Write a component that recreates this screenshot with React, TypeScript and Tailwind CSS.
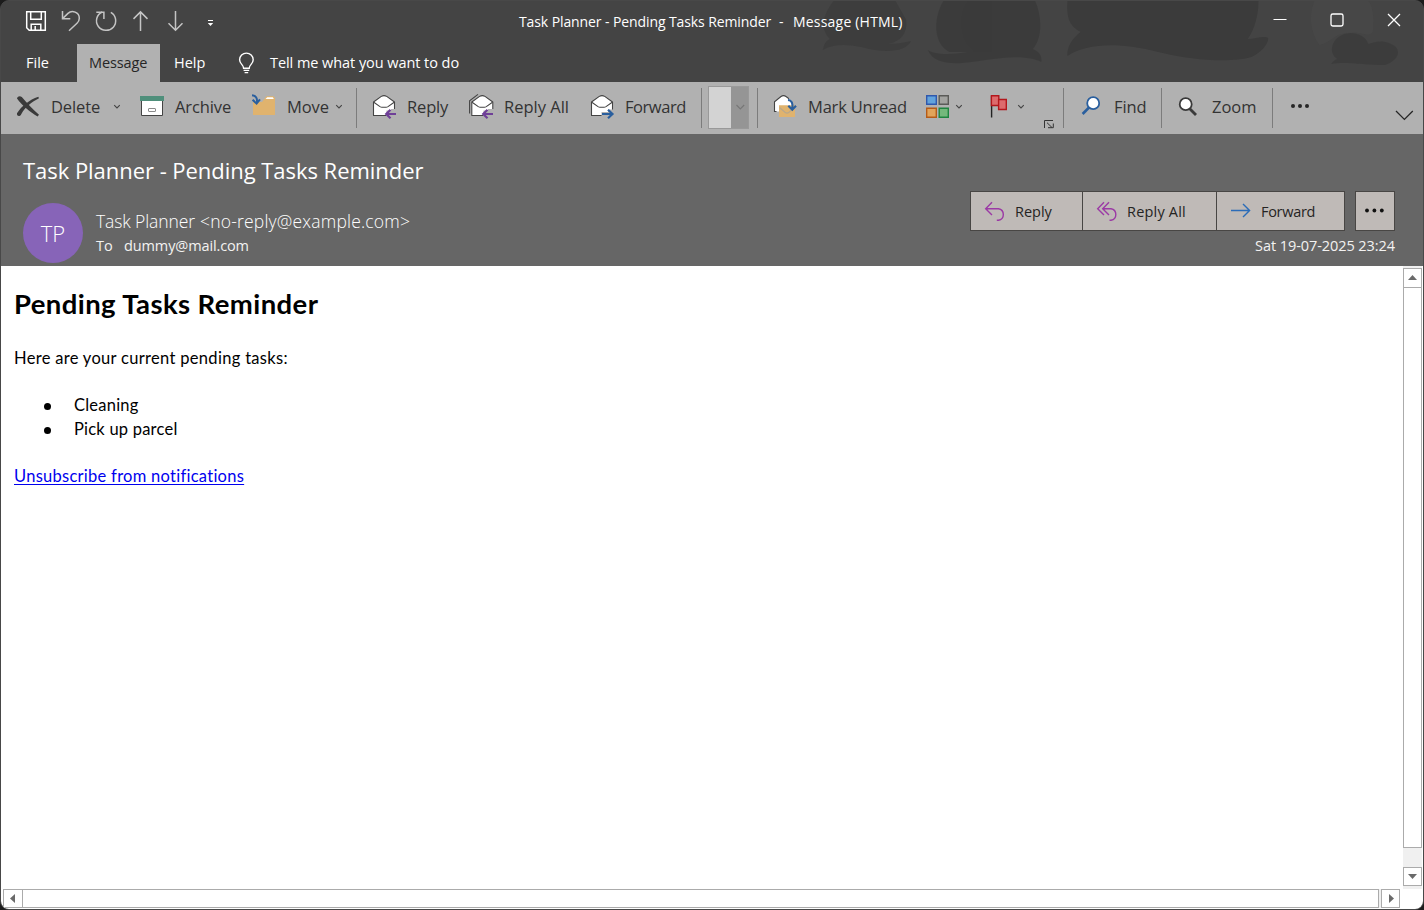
import React from "react";

/* A single line of text that keeps its own width inside a flex row. */
function T({ c = "", children }: { c?: string; children: React.ReactNode }) {
  return <span className={`shrink-0 whitespace-nowrap ${c}`}>{children}</span>;
}

/* Icons share the window's coordinate system: x/y is the window position of the box. */
function Ico({ x, y, w, h, children }: { x: number; y: number; w: number; h: number; children?: React.ReactNode }) {
  return (
    <svg className="shrink-0" width={w} height={h} viewBox={`${x} ${y} ${w} ${h}`} fill="none">
      {children}
    </svg>
  );
}

const Chevron = ({ x, y = 106.5 }: { x: number; y?: number }) => (
  <path d={`M${x - 2.8} ${y - 1.4} l2.8 2.8 l2.8 -2.8`} stroke="#444" strokeWidth="1.1" />
);

const Sep = () => <div className="h-10 w-px shrink-0 bg-[#7c7c7c]" />;

const Envelope = ({ x }: { x: number }) => (
  <g transform={`translate(${x} 0)`} stroke="#444" strokeWidth="1.1" strokeLinejoin="round">
    <path d="M.5 115.5V102L8.3 96.4Q11 94.8 13.7 96.4L21.5 102V115.5Z" fill="#fff" />
    <path d="M.8 102.3L7 106.6Q8 107.2 9 107.2H13Q14 107.2 15 106.6L21.2 102.3" />
  </g>
);

const t = "text-[16.5px] text-[#333] pb-0.5";

export default function App() {
  return (
    <div className="h-[910px] w-[1424px] overflow-hidden bg-[#1c1c1c] font-['Open_Sans',sans-serif]">
      <div className="flex h-[910px] w-[1424px] flex-col overflow-hidden rounded-[9px] border border-[#484848] bg-[#444]">
        <div className="relative h-[81px] shrink-0">
          <svg className="absolute inset-0" width="1422" height="81" viewBox="1 1 1422 81" fill="#3b3b3b">
            <g transform="translate(-155.2 0) scale(1.194 1)">
              <path d="M828 1C817 19 818 30 825 39C820 42 820 47 819 50C827 44 839 44 851 47C870 53 888 53 893 41C886 43 880 44 874 44C885 41 890 33 889 20L880 1Z" opacity=".75" />
              <path d="M940 1C932 12 932 42 945 51C925 56 911 54 907 50C911 61 921 64 936 63C956 61 977 54 995 59C998 60 1001 61 1002 62C1003 57 1001 52 995 49C1003 39 1003 17 997 1Z" opacity=".9" />
              <path d="M920 1C911 20 912 44 925 52L960 52V1Z" opacity=".9" />
              <path d="M1024 1C1023 16 1025 26 1035 32C1028 38 1023 48 1024 56C1040 43 1068 42 1100 52C1134 62 1163 62 1178 57C1186 53 1193 43 1192 38C1189 35 1181 39 1175 39C1181 29 1184 14 1184 1Z" />
              <path d="M1231 1C1226 15 1227 31 1235 45C1245 42 1246 35 1257 33C1272 30 1278 40 1280 30C1281 15 1279 5 1276 1Z" fill="#4a4a4a" opacity=".55" />
              <path d="M1261 33C1246 34 1241 52 1250 59C1247 60 1246 62 1245 64C1256 61 1272 65 1290 65C1303 60 1306 46 1290 42C1285 41 1281 42 1276 44C1274 37 1268 33 1261 33Z" opacity=".8" />
            </g>
          </svg>
          <div className="relative flex h-[43px] items-center text-[14px] text-white">
            <Ico x={1} y={1} w={518} h={43}>
              <g stroke="#fff" strokeWidth="1.5">
                <path d="M26.7 11.7H45.3V30.3H29.2L26.7 27.8Z" />
                <path d="M30.7 12V19.2H41.3V12" />
                <path d="M31.2 30V24.2H40.8V30M35.2 26V30" />
              </g>
              <g stroke="#c4c4c4" strokeWidth="1.5">
                <path d="M62.5 11V18.7H70.3" />
                <path d="M62.8 18.4L68 13.4C72 9.6 79.3 12.3 79.3 18.2C79.3 20.3 78.5 21.8 77 23.2L69 30.7" />
                <path d="M96.3 12.2H103.9V19" />
                <path d="M110.8 12.4A9.6 9.6 0 1 1 102.2 12" />
                <path d="M140.5 31V12M133.5 18.9L140.5 11.9L147.5 18.9" />
                <path d="M175.5 11V30M168.5 23.2L175.5 30.2L182.5 23.2" />
              </g>
              <path d="M208 20.5H213" stroke="#fff" />
              <path d="M207.8 23H213.2L210.5 26Z" fill="#fff" />
            </Ico>
            <div className="flex w-[741px] shrink-0 pb-0.5">
              <T c="w-[260px] tracking-[-0.1px]">Task Planner - Pending Tasks Reminder</T>
              <T c="w-[14px]">-</T>
              <T c="tracking-[0.2px]">Message (HTML)</T>
            </div>
            <Ico x={1260} y={1} w={163} h={43}>
              <path d="M1273.5 19.5H1286.5" stroke="#fff" strokeWidth="1.2" />
              <rect x="1331" y="14" width="12" height="12" rx="1.8" stroke="#fff" strokeWidth="1.3" />
              <path d="M1388 14L1400 26M1400 14L1388 26" stroke="#fff" strokeWidth="1.3" />
            </Ico>
          </div>
          <div className="relative flex h-[38px] items-center pl-[25px] text-[14.5px] text-white">
            <T c="w-[51px]">File</T>
            <div className="flex h-[38px] w-[83px] items-center bg-[#b1b1b1] pl-3 tracking-[-0.1px] text-[#262626]">
              <T>Message</T>
            </div>
            <T c="ml-3.5 w-[56px]">Help</T>
            <Ico x={230} y={44} w={40} h={38}>
              <path d="M243.6 68.3C243.6 64.6 239.6 64 239.6 59.7A6.8 6.6 0 0 1 253.2 59.7C253.2 64 249.2 64.6 249.2 68.3ZM243.6 70.4H249.2M244.6 72.6H248.2" stroke="#fff" strokeWidth="1.4" />
            </Ico>
            <T c="tracking-[-0.06px]">Tell me what you want to do</T>
          </div>
        </div>

        <div className="flex h-[52px] shrink-0 items-center bg-[#b1b1b1]">
          <Ico x={1} y={82} w={50} h={52}>
            <path d="M17 98.4C17.6 96.2 20 95.5 21.8 97.1C27.5 103.5 32.5 109.3 39 114.8L37.6 116.5C30 111.8 22.3 105.8 17 98.4Z" fill="#3a3a3a" />
            <path d="M39 98.3C31.8 101.9 25 107.3 21.1 114.4C19.6 117 16.4 115.9 17 113.3C21.5 106.2 29.3 99.8 38.3 96.8Z" fill="#3a3a3a" />
          </Ico>
          <T c={`w-[56px] tracking-[-0.1px] ${t}`}>Delete</T>
          <Ico x={107} y={82} w={68} h={52}>
            <Chevron x={117} />
            <path d="M141.5 100V115.5H162.5V100Z" fill="#fff" stroke="#444" />
            <path d="M140 96H164V101H140Z" fill="#4f8f7b" />
            <rect x="148.5" y="108.5" width="7" height="3" rx=".5" stroke="#8a8a8a" />
          </Ico>
          <T c={`w-[69px] tracking-[-0.1px] ${t}`}>Archive</T>
          <Ico x={244} y={82} w={43} h={52}>
            <path d="M253 102H262L266.5 96.3H273.5L275 98V115H253Z" fill="#e0b36e" />
            <path d="M265.5 99L267.2 97.2H272.8L273.8 99Z" fill="#fff" />
            <path d="M252 95.2C256 95.5 257.6 98.5 256.9 103M252.6 99.7L256.6 103.6L260 99.3" stroke="#2a5f9e" strokeWidth="2" />
          </Ico>
          <T c={`w-[46px] tracking-[-0.1px] ${t}`}>Move</T>
          <Ico x={333} y={82} w={23} h={52}>
            <Chevron x={339} />
          </Ico>
          <Sep />
          <Ico x={357} y={82} w={50} h={52}>
            <Envelope x={373} />
            <path d="M386.5 110.5H391V109H397V119H386Z" fill="#b1b1b1" />
            <path d="M396 114H386.3M390.5 109.7L386.2 114L390.5 118.3" stroke="#6f3f98" strokeWidth="2.2" />
          </Ico>
          <T c={`w-[53px] tracking-[-0.15px] ${t}`}>Reply</T>
          <Ico x={460} y={82} w={44} h={52}>
            <path d="M469.6 113.5V100.7L478 94.4" stroke="#444" strokeWidth="1.1" />
            <Envelope x={471.3} />
            <path d="M483.5 110.5H488V109H494V119H483Z" fill="#b1b1b1" />
            <path d="M493 114H483.3M487.5 109.7L483.2 114L487.5 118.3" stroke="#6f3f98" strokeWidth="2.2" />
          </Ico>
          <T c={`w-[76px] ${t}`}>Reply All</T>
          <Ico x={580} y={82} w={45} h={52}>
            <Envelope x={591} />
            <path d="M601.5 112H608V109.5H614V119H601.5Z" fill="#b1b1b1" />
            <path d="M602 114H612.5M608 109.7L612.5 114L608 118.3" stroke="#2a5f9e" strokeWidth="2.2" />
          </Ico>
          <T c={`w-[76px] tracking-[-0.45px] ${t}`}>Forward</T>
          <Sep />
          <div className="mx-1.5 mt-1 flex h-[43px] w-[41px] shrink-0 self-start border border-[#999] bg-[#959595]">
            <div className="w-[22px] bg-[#d3d3d3]" />
            <Ico x={731} y={87} w={17} h={41}>
              <path d="M736.5 105L740.3 109L744.2 105" stroke="#777" strokeWidth="1.1" />
            </Ico>
          </div>
          <div className="w-0.5 shrink-0" />
          <Sep />
          <Ico x={758} y={82} w={50} h={52}>
            <path d="M774.5 111.5V101.8L781 96.5Q783.5 94.8 786 96.5L792 101V111.5Z" fill="#fff" />
            <path d="M776.5 111.5H774.5V101.8L781 96.5Q783.5 94.8 786 96.5L789 98.7" stroke="#444" strokeWidth="1.1" />
            <path d="M779 105.3H795V117H779Z" fill="#e0b36e" />
            <path d="M779.5 107.5L785 112.3Q787 113.8 789 112.3L794.5 107.5" stroke="#b9a88c" strokeWidth="1.2" />
            <path d="M788 100C792 100.3 793 103.5 792.4 109M788.3 105.7L792.3 109.8L796 105.7" stroke="#2a5f9e" strokeWidth="2.1" />
          </Ico>
          <T c={`w-[110px] tracking-[-0.2px] ${t}`}>Mark Unread</T>
          <Ico x={918} y={82} w={145} h={52}>
            <g strokeWidth="1.4">
              <path d="M926.7 95.7H936.3V104.3H926.7Z" fill="#62a3dc" stroke="#2f58ad" />
              <path d="M939.2 95.7H948.3V104.3H939.2Z" fill="#a3a3a0" stroke="#5b5b58" />
              <path d="M926.7 108.2H936.3V117.3H926.7Z" fill="#e2a45a" stroke="#b55b18" />
              <path d="M939.2 108.2H948.3V117.3H939.2Z" fill="#74b87c" stroke="#1f8440" />
              <path d="M991.6 96V117.5" stroke="#222" />
              <path d="M991.4 95.7H998.8V105.5H991.4Z" fill="#dd6a6c" stroke="#b3171c" />
              <path d="M998.6 99.5H1006.3V109.5H998.6Z" fill="#dd6a6c" stroke="#b3171c" />
            </g>
            <Chevron x={959} />
            <Chevron x={1021} />
            <path d="M1044.5 128V120.5H1053M1047 122.7L1052 127.5M1053.3 123.5V127.7H1048" stroke="#333" />
          </Ico>
          <Sep />
          <Ico x={1064} y={82} w={50} h={52}>
            <path d="M1082.6 114L1089.5 107" stroke="#2a5f9e" strokeWidth="2.6" />
            <circle cx="1093.2" cy="103.2" r="6" fill="#fff" stroke="#2a5f9e" strokeWidth="1.8" />
          </Ico>
          <T c={`w-[47px] tracking-[-0.1px] ${t}`}>Find</T>
          <Sep />
          <Ico x={1162} y={82} w={50} h={52}>
            <path d="M1189.5 108.5L1196 115" stroke="#3a3a3a" strokeWidth="2.8" />
            <circle cx="1185.7" cy="104.2" r="6" fill="#fff" stroke="#3a3a3a" strokeWidth="1.8" />
          </Ico>
          <T c={`w-[60px] ${t}`}>Zoom</T>
          <Sep />
          <Ico x={1273} y={82} w={150} h={52}>
            <g fill="#262626">
              <circle cx="1293" cy="106" r="2" />
              <circle cx="1300" cy="106" r="2" />
              <circle cx="1307" cy="106" r="2" />
            </g>
            <path d="M1396 111L1404.4 119.4L1412.8 111" stroke="#262626" strokeWidth="1.3" />
          </Ico>
        </div>

        <div className="flex h-[132px] shrink-0 justify-between bg-[#666] pr-7 pl-[22px]">
          <div className="flex flex-col text-white">
            <T c="mt-5 h-8 text-[22px] leading-8 tracking-[-0.04px]">Task Planner - Pending Tasks Reminder</T>
            <div className="mt-[17px] flex">
              <div className="flex size-[60px] items-center justify-center rounded-full bg-[#8764b8] text-[22px] font-light">
                <T>TP</T>
              </div>
              <div className="ml-[13px] flex flex-col pt-1.5 text-[#f3f2f1]">
                <div className="flex h-[25px] text-[17.5px] leading-6 font-light text-white">
                  <T c="w-[104px] tracking-[-0.1px]">Task Planner</T>
                  <T c="tracking-[0.2px]">&lt;no-reply@example.com&gt;</T>
                </div>
                <div className="flex h-6 text-[14.5px] leading-6">
                  <T c="w-7">To</T>
                  <T c="tracking-[-0.12px]">dummy@mail.com</T>
                </div>
              </div>
            </div>
          </div>
          <div className="flex flex-col items-end pt-[57px]">
            <div className="flex gap-2.5 text-[14.5px] text-[#252423]">
              <div className="flex h-10 w-[375px] border border-[#484644] bg-[#bfbab7]">
                <div className="flex w-[112px] items-center border-r border-[#484644]">
                  <Ico x={971} y={192} w={44} h={38}>
                    <path d="M992 202.3L985.7 208.7L992 215M985.7 208.7H998.5A5.9 5.9 0 0 1 998.5 220.3H996.8" stroke="#9b3aa5" strokeWidth="1.4" />
                  </Ico>
                  <T c="pt-0.5">Reply</T>
                </div>
                <div className="flex w-[134px] items-center border-r border-[#484644]">
                  <Ico x={1083} y={192} w={44} h={38}>
                    <path d="M1104 202.3L1097.7 208.7L1104 215M1109 202.3L1102.7 208.7L1109 215M1102.7 208.7H1111A5.9 5.9 0 0 1 1111 220.3H1109.5" stroke="#9b3aa5" strokeWidth="1.4" />
                  </Ico>
                  <T c="pt-0.5 tracking-[0.2px]">Reply All</T>
                </div>
                <div className="flex items-center">
                  <Ico x={1217} y={192} w={44} h={38}>
                    <path d="M1231 210.5H1249.5M1243 204L1249.6 210.5L1243 217" stroke="#2b6cb8" strokeWidth="1.4" />
                  </Ico>
                  <T c="pt-0.5 tracking-[-0.3px]">Forward</T>
                </div>
              </div>
              <div className="flex h-10 w-10 items-center justify-center border border-[#484644] bg-[#bfbab7]">
                <Ico x={1356} y={192} w={38} h={38}>
                  <g fill="#111">
                    <circle cx="1367" cy="210.5" r="1.9" />
                    <circle cx="1374.4" cy="210.5" r="1.9" />
                    <circle cx="1381.8" cy="210.5" r="1.9" />
                  </g>
                </Ico>
              </div>
            </div>
            <T c="mt-[3px] h-6 text-[14.5px] leading-6 tracking-[-0.07px] text-[#f3f2f1]">Sat 19-07-2025 23:24</T>
          </div>
        </div>

        <div className="flex min-h-0 grow flex-col bg-white">
          <div className="flex min-h-0 grow">
            <div className="flex grow flex-col items-start pl-[13px] pt-5 font-['Lato',sans-serif] text-[16.5px] text-black">
              <h1 className="h-9 text-[27.5px] leading-9 font-bold tracking-[0.4px] whitespace-nowrap">Pending Tasks Reminder</h1>
              <p className="mt-6 h-6 leading-6 tracking-[0.31px] whitespace-nowrap">Here are your current pending tasks:</p>
              <ul className="mt-[23px] pl-[30px] tracking-[0.22px]">
                <li className="flex h-6 items-center">
                  <span className="mt-0.5 mr-[23px] size-[7px] rounded-full bg-black" />
                  <T>Cleaning</T>
                </li>
                <li className="flex h-6 items-center">
                  <span className="mt-0.5 mr-[23px] size-[7px] rounded-full bg-black" />
                  <T>Pick up parcel</T>
                </li>
              </ul>
              <a className="mt-[23px] h-6 leading-6 tracking-[0.27px] whitespace-nowrap text-[#0000ee] underline decoration-1 underline-offset-[2px] [text-decoration-skip-ink:none]">
                Unsubscribe from notifications
              </a>
            </div>
            <div className="mr-px flex w-[19px] shrink-0 flex-col bg-[#f0f0f0] pt-0.5">
              <div className="flex h-5 items-center justify-center border border-[#ababab] bg-white pb-0.5">
                <Ico x={0} y={0} w={9} h={5}><path d="M0 5L4.5 0L9 5Z" fill="#6a6a6a" /></Ico>
              </div>
              <div className="-mt-px h-[561px] border border-[#ababab] bg-white" />
              <div className="mt-[19px] flex h-[19px] items-center justify-center border border-[#ababab] bg-white">
                <Ico x={0} y={0} w={9} h={5}><path d="M0 0L4.5 5L9 0Z" fill="#6a6a6a" /></Ico>
              </div>
            </div>
          </div>
          <div className="mb-px flex h-[19px] shrink-0 pl-0.5">
            <div className="flex w-5 items-center justify-center border border-[#ababab] bg-white pr-0.5">
              <Ico x={0} y={0} w={5} h={9}><path d="M5 0L0 4.5L5 9Z" fill="#6a6a6a" /></Ico>
            </div>
            <div className="-ml-px w-[1357px] border border-[#ababab] bg-white" />
            <div className="w-0.5 bg-[#f0f0f0]" />
            <div className="flex w-[19px] items-center justify-center border border-[#ababab] bg-white pl-px">
              <Ico x={0} y={0} w={5} h={9}><path d="M0 0L5 4.5L0 9Z" fill="#6a6a6a" /></Ico>
            </div>
          </div>
        </div>
      </div>
    </div>
  );
}
